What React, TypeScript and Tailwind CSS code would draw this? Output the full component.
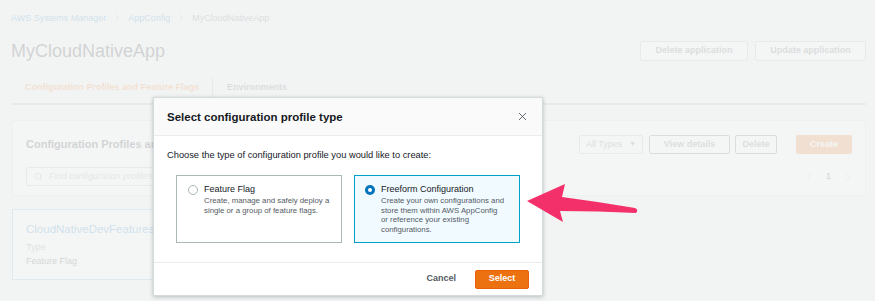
import { ChevronRight, ChevronLeft, X, Search } from "lucide-react";

function Radio({ checked }: { checked: boolean }) {
  return checked ? (
    <span className="mt-[1px] flex h-[10px] w-[10px] shrink-0 items-center justify-center rounded-full bg-[#0073bb]">
      <span className="h-[4px] w-[4px] rounded-full bg-white" />
    </span>
  ) : (
    <span className="mt-[1px] h-[10px] w-[10px] shrink-0 rounded-full border border-[#aab7b8] bg-white" />
  );
}

export default function App() {
  return (
    <div className="relative h-[301px] w-[875px] overflow-hidden bg-[#f2f3f3] font-['Liberation_Sans',Arial,sans-serif] text-[#16191f]">
      {/* Underlying page */}
      <div className="pl-[11px] pr-[9px]">
        <div className="flex h-[24px] items-center gap-[5px] pt-[12px] text-[9px] leading-[12px]">
          <span className="text-[#0073bb]">AWS Systems Manager</span>
          <ChevronRight size={12} strokeWidth={1.3} className="text-[#687078]" />
          <span className="text-[#0073bb]">AppConfig</span>
          <ChevronRight size={12} strokeWidth={1.3} className="text-[#687078]" />
          <span className="text-[#545b64]">MyCloudNativeApp</span>
        </div>
        <div className="mt-[17px] flex h-[20px] items-center justify-between">
          <span className="text-[18px] leading-[20px] text-[#16191f]">MyCloudNativeApp</span>
          <div className="flex gap-[7px]">
            <button className="h-[20px] w-[108px] rounded-[2px] border border-[#aab7b8] bg-white text-[9px] font-bold text-[#545b64]">
              Delete application
            </button>
            <button className="h-[20px] w-[111px] rounded-[2px] border border-[#aab7b8] bg-white text-[9px] font-bold text-[#545b64]">
              Update application
            </button>
          </div>
        </div>
        <div className="ml-[1px] mt-[12px] flex h-[32px] items-center border-b-2 border-[#aab7b8]">
          <span className="px-[13px] text-[9px] font-bold text-[#ec7211]">
            Configuration Profiles and Feature Flags
          </span>
          <span className="h-[20px] w-px bg-[#aab7b8]" />
          <span className="px-[14px] text-[9px] font-bold text-[#545b64]">Environments</span>
        </div>
        <div className="ml-[1px] mt-[15px] h-[76px] border border-[#d5dbdb] bg-white px-[13px] pt-[14px]">
          <div className="flex h-[19px] items-center justify-between">
            <span className="text-[11px] font-bold text-[#16191f]">
              Configuration Profiles and Feature Flags (1)
            </span>
            <div className="flex items-center">
              <span className="flex h-[19px] w-[64px] items-center justify-between rounded-[2px] border border-[#aab7b8] bg-white px-[6px] text-[9px] text-[#545b64]">
                All Types
                <span className="text-[7px]">▼</span>
              </span>
              <span className="ml-[6px] flex h-[19px] w-[81px] items-center justify-center rounded-[2px] border border-[#545b64] bg-white text-[9px] font-bold text-[#545b64]">
                View details
              </span>
              <span className="ml-[5px] flex h-[19px] w-[42px] items-center justify-center rounded-[2px] border border-[#545b64] bg-white text-[9px] font-bold text-[#545b64]">
                Delete
              </span>
              <span className="ml-[19px] flex h-[19px] w-[56px] items-center justify-center rounded-[2px] bg-[#ec7211] text-[9px] font-bold text-white">
                Create
              </span>
            </div>
          </div>
          <div className="mt-[13px] flex h-[19px] items-center justify-between">
            <div className="flex h-[19px] w-[480px] items-center gap-[6px] rounded-[2px] border border-[#aab7b8] bg-white px-[7px] text-[9px] italic text-[#879596]">
              <Search size={9} strokeWidth={2.2} className="not-italic" />
              Find configuration profiles and feature flags
            </div>
            <div className="-mr-[2px] flex items-center gap-[11px] text-[9px] font-bold text-[#545b64]">
              <ChevronLeft size={12} strokeWidth={1.5} className="text-[#aab7b8]" />
              <span>1</span>
              <ChevronRight size={12} strokeWidth={1.5} className="text-[#aab7b8]" />
            </div>
          </div>
        </div>
        <div className="ml-[1px] mt-[13px] h-[71px] w-[300px] border border-[#7aaed0] bg-white px-[13px] pt-[12px]">
          <div className="text-[11.5px] leading-[14px] text-[#0073bb]">CloudNativeDevFeatures</div>
          <div className="mt-[5px] text-[9px] leading-[12px] text-[#687078]">Type</div>
          <div className="mt-[2px] text-[9px] leading-[12px] text-[#16191f]">Feature Flag</div>
        </div>
      </div>

      {/* Overlay */}
      <div className="absolute inset-0 bg-[#f2f3f3]/85" />

      {/* Modal */}
      <div className="absolute left-[153px] top-[97px] flex h-[199px] w-[390px] flex-col border border-[#d5dbdb] bg-white shadow-[0_1px_4px_rgba(0,28,36,0.25)]">
        <div className="flex h-[38px] shrink-0 items-center justify-between border-b border-[#eaeded] bg-[#fafafa] pl-[13px] pr-[13px]">
          <span className="text-[11.5px] font-bold leading-[14px] text-[#16191f]">
            Select configuration profile type
          </span>
          <X size={13} strokeWidth={1.7} className="text-[#545b64]" />
        </div>
        <div className="flex-1 px-[13px] pt-[13px]">
          <div className="text-[9.3px] leading-[12px] text-[#16191f]">
            Choose the type of configuration profile you would like to create:
          </div>
          <div className="mx-[9px] mt-[14px] grid grid-cols-2 gap-[12px]">
            <div className="flex h-[68px] gap-[6px] border border-[#aab7b8] bg-white pl-[11px] pt-[8px]">
              <Radio checked={false} />
              <div>
                <div className="text-[9px] leading-[11px] text-[#16191f]">Feature Flag</div>
                <div className="mt-[1px] text-[7.8px] leading-[9.5px] text-[#545b64]">
                  Create, manage and safely deploy a
                  <br />
                  single or a group of feature flags.
                </div>
              </div>
            </div>
            <div className="flex h-[68px] gap-[6px] border border-[#00a1c9] bg-[#f1faff] pl-[10px] pt-[8px]">
              <Radio checked={true} />
              <div>
                <div className="text-[9px] leading-[11px] text-[#16191f]">Freeform Configuration</div>
                <div className="mt-[1px] text-[7.8px] leading-[9.5px] text-[#545b64]">
                  Create your own configurations and
                  <br />
                  store them within AWS AppConfig
                  <br />
                  or reference your existing
                  <br />
                  configurations.
                </div>
              </div>
            </div>
          </div>
        </div>
        <div className="flex h-[33px] shrink-0 items-center justify-end border-t border-[#eaeded] pr-[13px]">
          <span className="mr-[19px] text-[9px] font-bold text-[#545b64]">Cancel</span>
          <span className="flex h-[19px] w-[54px] items-center justify-center rounded-[2px] border border-[#eb5f07] bg-[#ec7211] text-[9px] font-bold text-white">
            Select
          </span>
        </div>
      </div>

      {/* Arrow */}
      <svg
        className="absolute left-[520px] top-[170px] h-[60px] w-[125px]"
        viewBox="0 0 125 60"
      >
        <path
          d="M7,31 L45,14 L42,27 Q80,32 115,38 Q119,40 116,43 Q78,41 40,41 L43,52 Z"
          fill="#f4306a"
        />
      </svg>
    </div>
  );
}
